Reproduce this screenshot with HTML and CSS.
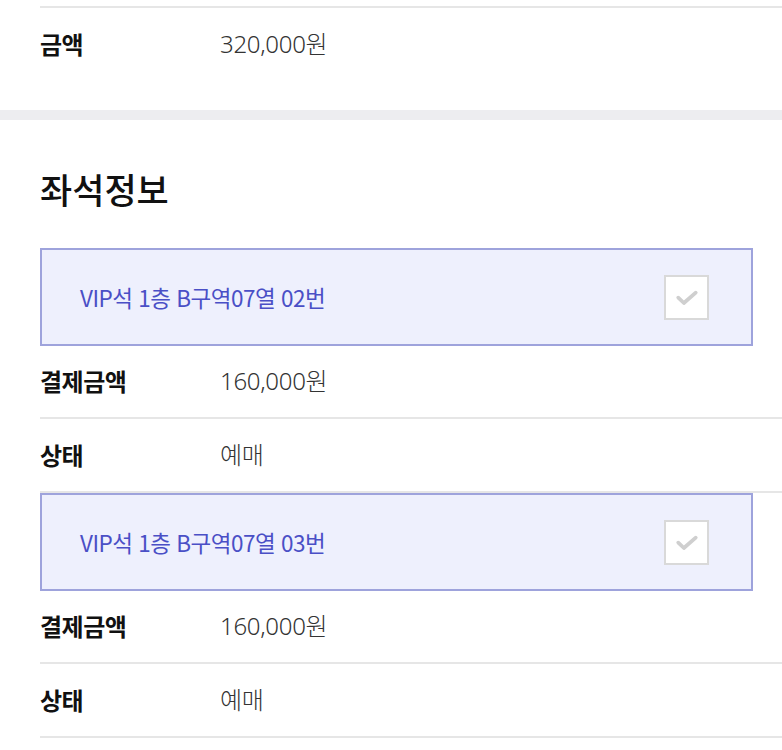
FILE: index.html
```html
<!DOCTYPE html>
<html lang="ko">
<head>
<meta charset="utf-8">
<link rel="stylesheet" href="styles.css">
</head>
<body>
<div class="summary">
  <div class="row top">
    <div class="label">금액</div>
    <div class="value">320,000원</div>
  </div>
</div>
<div class="band"></div>
<div class="seats">
  <h2 class="title">좌석정보</h2>
  <div class="seat">
    <span class="seat-name">VIP석 1층 B구역07열 02번</span>
    <span class="check"><svg viewBox="0 0 24 24" width="30" height="30"><path d="M5 12.5l4.5 4.3L19 8.5" fill="none" stroke="#cfcfcf" stroke-width="3" stroke-linecap="round" stroke-linejoin="round"/></svg></span>
  </div>
  <div class="row">
    <div class="label">결제금액</div>
    <div class="value">160,000원</div>
  </div>
  <div class="row">
    <div class="label">상태</div>
    <div class="value">예매</div>
  </div>
  <div class="seat">
    <span class="seat-name">VIP석 1층 B구역07열 03번</span>
    <span class="check"><svg viewBox="0 0 24 24" width="30" height="30"><path d="M5 12.5l4.5 4.3L19 8.5" fill="none" stroke="#cfcfcf" stroke-width="3" stroke-linecap="round" stroke-linejoin="round"/></svg></span>
  </div>
  <div class="row">
    <div class="label">결제금액</div>
    <div class="value">160,000원</div>
  </div>
  <div class="row">
    <div class="label">상태</div>
    <div class="value">예매</div>
  </div>
</div>
</body>
</html>
```
FILE: styles.css
```css
html, body {
  margin: 0;
  padding: 0;
  background: #fff;
  font-family: "Noto Sans CJK KR", "Noto Sans", sans-serif;
  color: #111;
}
.summary {
  padding: 6px 0 0 40px;
  height: 110px;
  box-sizing: border-box;
}
.row {
  display: flex;
  align-items: center;
  height: 73px;
  border-bottom: 2px solid #e6e6e6;
  box-sizing: border-box;
  line-height: 1.2;
}
.row.top {
  border-bottom: none;
  border-top: 2px solid #e6e6e6;
  height: 74px;
}
.label {
  width: 180px;
  font-size: 24px;
  font-weight: 700;
  color: #111;
  letter-spacing: -0.5px;
}
.value {
  font-family: "Noto Sans", "Noto Sans CJK KR", sans-serif;
  font-size: 24px;
  font-weight: 300;
  color: #333;
  letter-spacing: -0.3px;
}
.band {
  height: 10px;
  background: #ededf0;
}
.seats {
  padding-left: 40px;
}
.title {
  margin: 0;
  padding-top: 44px;
  height: 128px;
  box-sizing: border-box;
  font-size: 35px;
  font-weight: 500;
  line-height: 50px;
  color: #111;
}
.seat {
  display: flex;
  align-items: center;
  justify-content: space-between;
  margin-right: 29px;
  height: 98px;
  box-sizing: border-box;
  border: 2px solid #9ea3dc;
  background: #eef0fd;
  padding: 0 42px 0 38px;
}
.seat-name {
  font-size: 22.5px;
  color: #4a4fc6;
  font-weight: 400;
  letter-spacing: -0.5px;
}
.check {
  width: 45px;
  height: 45px;
  box-sizing: border-box;
  border: 2px solid #d9d9d9;
  background: #fff;
  display: flex;
  align-items: center;
  justify-content: center;
}
.seat + .row {
  height: 73px;
}
.row + .row {
  height: 74px;
}
```
